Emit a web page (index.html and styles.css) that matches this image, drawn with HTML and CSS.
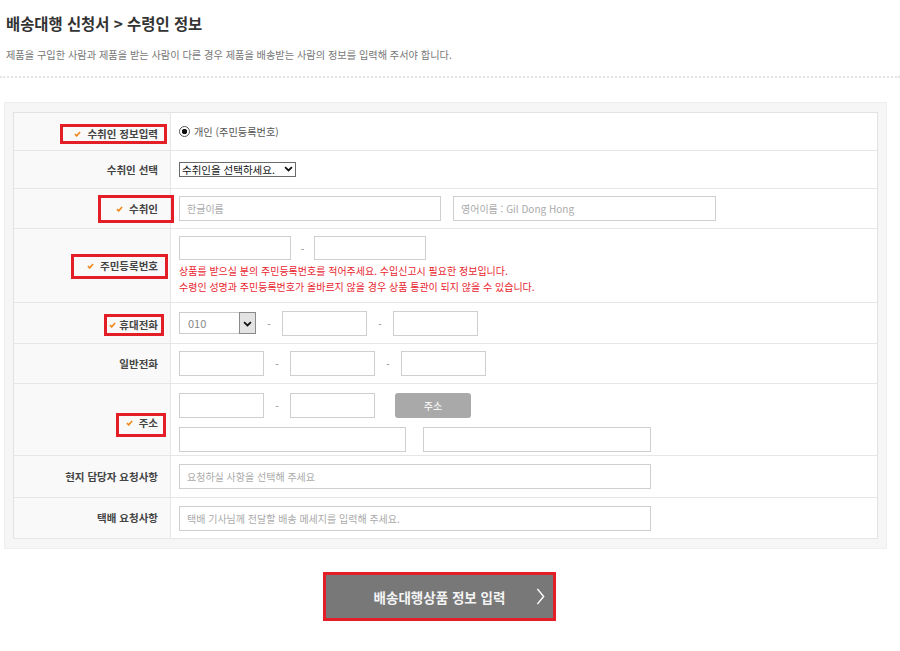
FILE: index.html
```html
<!DOCTYPE html>
<html lang="ko">
<head>
    <meta charset="UTF-8">
    <meta name="viewport" content="width=device-width, initial-scale=1.0">
    <title>배송대행 신청서 - 수령인 정보</title>
    <link rel="stylesheet" href="styles.css">
</head>
<body>
    <div id="wrap">
        <div class="head">
            <h2 class="title">배송대행 신청서 &gt; 수령인 정보</h2>
            <p class="desc">제품을 구입한 사람과 제품을 받는 사람이 다른 경우 제품을 배송받는 사람의 정보를 입력해 주서야 합니다.</p>
        </div>

        <div class="formBox">
            <table class="formTbl">
                <tr class="h38">
                    <th>
                        <div class="lbl">
                            <span class="mark m-info"><svg class="chk" viewBox="0 0 8 7"><path d="M1 3.6 L3.1 5.7 L7 1.2"/></svg>수취인 정보입력</span>
                        </div>
                    </th>
                    <td>
                        <label class="radio"><input type="radio" name="type" checked> 개인 (주민등록번호)</label>
                    </td>
                </tr>
                <tr class="h38">
                    <th><div class="lbl">수취인 선택</div></th>
                    <td>
                        <div class="sel">
                            <select class="selBasic">
                                <option>수취인을 선택하세요.</option>
                            </select>
                            <svg class="arr" viewBox="0 0 10 7"><path d="M1 1.2 L5 5.2 L9 1.2"/></svg>
                        </div>
                    </td>
                </tr>
                <tr class="h40">
                    <th>
                        <div class="lbl">
                            <span class="mark m-name"><svg class="chk" viewBox="0 0 8 7"><path d="M1 3.6 L3.1 5.7 L7 1.2"/></svg>수취인</span>
                        </div>
                    </th>
                    <td>
                        <div class="fld gap12">
                            <input class="ipt w262" type="text" placeholder="한글이름">
                            <input class="ipt w263" type="text" placeholder="영어이름 : Gil Dong Hong">
                        </div>
                    </td>
                </tr>
                <tr class="h74">
                    <th>
                        <div class="lbl">
                            <span class="mark m-id"><svg class="chk" viewBox="0 0 8 7"><path d="M1 3.6 L3.1 5.7 L7 1.2"/></svg>주민등록번호</span>
                        </div>
                    </th>
                    <td>
                        <div class="fld">
                            <input class="ipt w112 h24" type="text">
                            <span class="dash d23">-</span>
                            <input class="ipt w112 h24" type="text">
                        </div>
                        <p class="notice">상품를 받으실 분의 주민등록번호를 적어주세요. 수입신고시 필요한 정보입니다.<br>수령인 성명과 주민등록번호가 올바르지 않을 경우 상품 통관이 되지 않을 수 있습니다.</p>
                    </td>
                </tr>
                <tr class="h41">
                    <th>
                        <div class="lbl">
                            <span class="mark m-mob"><svg class="chk" viewBox="0 0 8 7"><path d="M1 3.6 L3.1 5.7 L7 1.2"/></svg>휴대전화</span>
                        </div>
                    </th>
                    <td>
                        <div class="fld">
                            <div class="sel">
                                <select class="selTel">
                                    <option>010</option>
                                </select>
                                <span class="arrBox"><svg class="arr" viewBox="0 0 10 7"><path d="M1 1.2 L5 5.2 L9 1.2"/></svg></span>
                            </div>
                            <span class="dash">-</span>
                            <input class="ipt w85" type="text">
                            <span class="dash">-</span>
                            <input class="ipt w85" type="text">
                        </div>
                    </td>
                </tr>
                <tr class="h40">
                    <th><div class="lbl">일반전화</div></th>
                    <td>
                        <div class="fld">
                            <input class="ipt w85" type="text">
                            <span class="dash">-</span>
                            <input class="ipt w85" type="text">
                            <span class="dash">-</span>
                            <input class="ipt w85" type="text">
                        </div>
                    </td>
                </tr>
                <tr class="h72">
                    <th>
                        <div class="lbl">
                            <span class="mark m-addr"><svg class="chk" viewBox="0 0 8 7"><path d="M1 3.6 L3.1 5.7 L7 1.2"/></svg>주소</span>
                        </div>
                    </th>
                    <td class="addrCell">
                        <div class="fld">
                            <input class="ipt w85" type="text">
                            <span class="dash">-</span>
                            <input class="ipt w85" type="text">
                            <button class="addrBtn" type="button">주소</button>
                        </div>
                        <div class="fld gap17 mt9">
                            <input class="ipt w227" type="text">
                            <input class="ipt w228" type="text">
                        </div>
                    </td>
                </tr>
                <tr class="h42">
                    <th><div class="lbl">현지 담당자 요청사항</div></th>
                    <td><input class="ipt w472" type="text" placeholder="요청하실 사항을 선택해 주세요"></td>
                </tr>
                <tr class="h41">
                    <th><div class="lbl">택배 요청사항</div></th>
                    <td><input class="ipt w472" type="text" placeholder="택배 기사님께 전달할 배송 메세지를 입력해 주세요."></td>
                </tr>
            </table>
        </div>

        <div class="btnArea">
            <button class="nextBtn" type="button">
                <span class="txt">배송대행상품 정보 입력</span>
                <svg class="next" viewBox="0 0 10 20"><path d="M1.5 1.5 L8.5 10 L1.5 18.5"/></svg>
            </button>
        </div>
    </div>
</body>
</html>
```

FILE: styles.css
```css
*{margin: 0; padding: 0; box-sizing: border-box;}
body {
    font-family: "Noto Sans CJK KR", "Noto Sans", sans-serif;
    color: #444;
    background: #fff;
}
#wrap {
    width: 900px;
}

/* 상단 제목 */
.head {
    padding: 12px 0 13px 6px;
    border-bottom: 2px dotted #e4e4e4;
}
.title {
    font-size: 15.4px;
    line-height: 22px;
    font-weight: bold;
    color: #333;
}
.desc {
    margin-top: 13px;
    font-size: 10.2px;
    line-height: 16px;
    color: #777;
}

/* 입력 테이블 */
.formBox {
    width: 883px;
    margin: 24px 0 0 4px;
    padding: 9px 8px;
    border: 1px solid #eee;
    background: #f6f6f6;
}
.formTbl {
    width: 100%;
    border-collapse: collapse;
    background: #fff;
    border: 1px solid #e2e2e2;
}
.formTbl th {
    width: 157px;
    padding-right: 12px;
    background: #f9f9f9;
    border-right: 1px solid #e6e6e6;
    border-bottom: 1px solid #e6e6e6;
    font-size: 10.5px;
    font-weight: bold;
    color: #444;
    text-align: right;
}
.formTbl td {
    padding: 0 8px;
    border-bottom: 1px solid #e6e6e6;
    vertical-align: middle;
    font-size: 10px;
}
.h38 {height: 38px;}
.h40 {height: 40px;}
.h41 {height: 41px;}
.h42 {height: 42px;}
.h72 {height: 72px;}
.h74 {height: 74px;}

.lbl {
    display: flex;
    justify-content: flex-end;
    align-items: center;
    line-height: 14px;
}

/* 필수 표시 (빨간 박스) */
.mark {
    display: inline-flex;
    align-items: center;
    border: 3px solid #e41e26;
}
.chk {
    width: 7px;
    height: 6px;
    margin-right: 6px;
    fill: none;
    stroke: #f0891e;
    stroke-width: 1.9;
}
.m-info {padding: 0 6px 0 11px; margin: 4px -9px 0 0;}
.m-name {padding: 4px 13px 4px 15px; margin-right: -16px;}
.m-id {padding: 2px 7px 3px 13px; margin: 1px -10px 0 0;}
.m-mob {padding: 1px 3px 1px 2px; margin: 3px -6px 0 0;}
.m-mob .chk {margin-right: 3px;}
.m-addr {padding: 0 5px 4px 7px; margin: 10px -8px 0 0;}

/* 라디오 */
.radio {
    display: inline-flex;
    align-items: center;
    gap: 4px;
    font-size: 10.2px;
    color: #555;
}
.radio input {
    appearance: none;
    width: 11px;
    height: 11px;
    border: 1px solid #555;
    border-radius: 50%;
    background: #fff;
}
.radio input:checked {
    background: radial-gradient(circle, #111 0 2.4px, #fff 3px);
}

/* 셀렉트 */
.sel {
    position: relative;
    display: inline-block;
}
.sel select {
    appearance: none;
    display: block;
    font-family: inherit;
    background: #fff;
    border-radius: 0;
    outline: none;
}
.selBasic {
    width: 117px;
    height: 15px;
    padding: 0 0 0 2px;
    border: 1px solid #6a6a6a;
    font-size: 10.5px;
    line-height: 13px;
    color: #111;
}
.sel .arr {
    position: absolute;
    right: 3px;
    top: 4px;
    width: 9px;
    height: 6px;
    fill: none;
    stroke: #111;
    stroke-width: 2;
}
.selTel {
    width: 77px;
    height: 22px;
    padding-left: 8px;
    border: 1px solid #ccc;
    font-size: 11px;
    color: #888;
}
.arrBox {
    position: absolute;
    right: 0;
    top: 0;
    width: 17px;
    height: 22px;
    background: #e3e3e3;
    border: 1px solid #8a8a8a;
}
.arrBox .arr {
    right: 3px;
    top: 8px;
}

/* 인풋 */
.fld {
    display: flex;
    align-items: center;
}
.gap12 {gap: 12px;}
.gap17 {gap: 17px;}
.mt9 {margin-top: 9px;}
.ipt {
    height: 25px;
    padding: 0 7px;
    border: 1px solid #cfcfcf;
    font-family: inherit;
    font-size: 10px;
    color: #333;
    outline: none;
}
.ipt::placeholder {
    color: #aaa;
}
.w85 {width: 85px;}
.w112 {width: 112px;}
.w227 {width: 227px;}
.w228 {width: 228px;}
.w262 {width: 262px;}
.w263 {width: 263px;}
.w472 {width: 472px;}
.h24 {height: 24px;}
.dash {
    width: 26px;
    text-align: center;
    color: #888;
    font-size: 10px;
}
.d23 {width: 23px;}
.notice {
    margin-top: 3px;
    font-size: 10px;
    line-height: 16px;
    color: #e8262f;
}
.addrCell {
    padding-top: 5px !important;
}
.addrBtn {
    width: 76px;
    height: 25px;
    margin-left: 20px;
    border: 0;
    border-radius: 3px;
    background: #a9a9a9;
    color: #fff;
    font-family: inherit;
    font-size: 10px;
}

/* 하단 버튼 */
.btnArea {
    padding: 23px 21px 0 0;
    text-align: center;
}
.nextBtn {
    display: inline-grid;
    grid-template-columns: 1fr auto 1fr;
    align-items: center;
    width: 233px;
    height: 49px;
    border: 3px solid #e41e26;
    background: #787878;
    color: #f4f4f4;
    font-family: inherit;
    font-size: 13.5px;
    font-weight: bold;
}
.nextBtn .txt {
    grid-column: 2;
}
.nextBtn .next {
    grid-column: 3;
    justify-self: end;
    margin-right: 8px;
    width: 9px;
    height: 19px;
    fill: none;
    stroke: #fff;
    stroke-width: 1.6;
}
```
